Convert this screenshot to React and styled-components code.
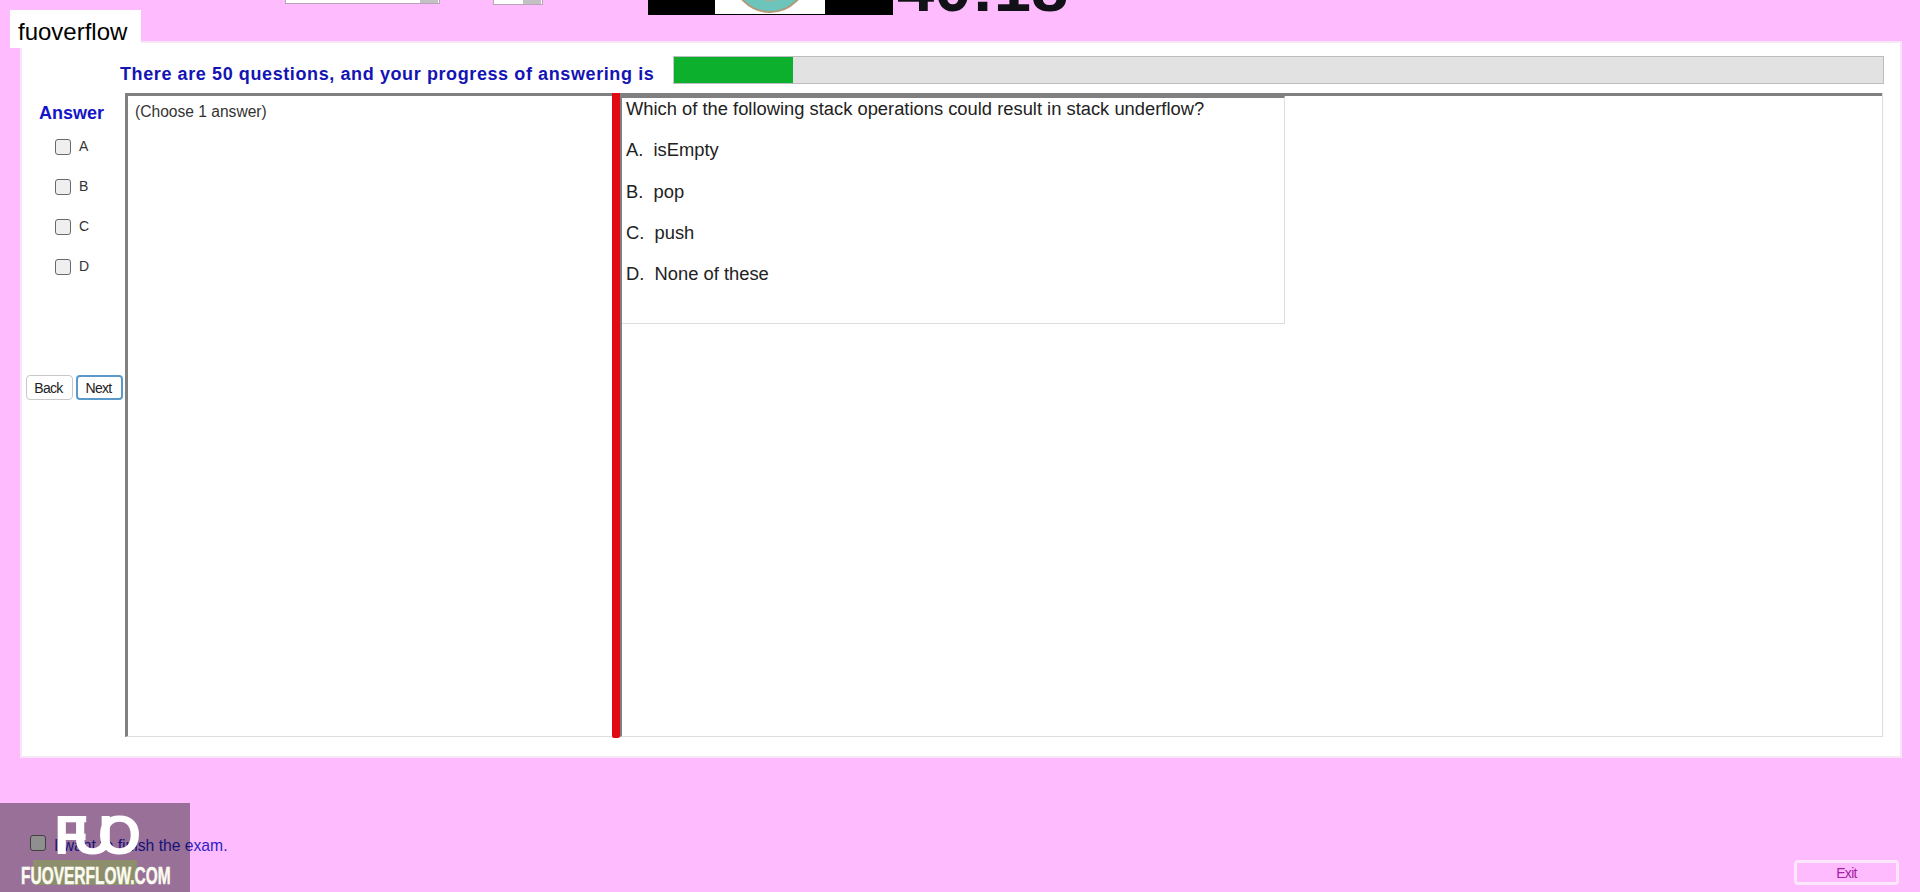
import React from 'react';
import styled, { createGlobalStyle } from 'styled-components';

const GlobalStyle = createGlobalStyle`
  html, body {
    margin: 0;
    padding: 0;
    background: #febbfe;
    font-family: "Liberation Sans", Arial, sans-serif;
  }
`;

const Page = styled.div`
  position: relative;
  width: 1920px;
  height: 892px;
  overflow: hidden;
  display: flex;
  flex-direction: column;
`;

/* top strip is cut off by the window, only the bottom of each control shows */
const TopStrip = styled.div`
  height: 41px;
  flex: none;
  display: flex;
  align-items: flex-start;
  padding-left: 285px;
  overflow: hidden;
`;

const Combo = styled.div`
  width: ${(p) => p.$width}px;
  margin-right: ${(p) => p.$gap}px;
  height: ${(p) => p.$height}px;
  box-sizing: border-box;
  background: #fff;
  border: 1px solid #b5a5b5;
  border-top: none;
  display: flex;
  justify-content: flex-end;
  padding-right: 1px;
`;

const ComboArrow = styled.div`
  width: 18px;
  background: #c4c0c4;
`;

const LogoBox = styled.div`
  width: 245px;
  height: 15px;
  background: #000;
  display: flex;
  justify-content: center;
  margin-left: 3px;
`;

const LogoWhite = styled.div`
  width: 110px;
  height: 14px;
  background: #fff;
  margin-left: -1px;
`;

const Timer = styled.div`
  margin: -45px 0 0 4px;
  font-size: 67px;
  line-height: 66px;
  font-weight: 700;
  color: #131118;
`;

const Tag = styled.div`
  position: absolute;
  left: 10px;
  top: 10px;
  width: 131px;
  height: 38px;
  box-sizing: border-box;
  padding-left: 8px;
  background: #fff;
  color: #000;
  font-size: 24px;
  line-height: 44px;
`;

const Panel = styled.div`
  width: 1882px;
  height: 717px;
  flex: none;
  margin-left: 20px;
  box-sizing: border-box;
  background: #fff;
  border: 2px solid #f6e6f6;
  padding: 13px 17px 19px 3px;
  display: flex;
  flex-direction: column;
`;

const HeaderRow = styled.div`
  height: 28px;
  flex: none;
  margin: 0 -1px 9px 0;
  display: flex;
  align-items: center;
`;

const ProgressLabel = styled.div`
  width: 648px;
  flex: none;
  box-sizing: border-box;
  padding: 8px 0 0 95px;
  font-size: 18px;
  font-weight: 700;
  letter-spacing: 0.6px;
  color: #1414b4;
  white-space: nowrap;
`;

const ProgressTrack = styled.div`
  flex: 1;
  height: 28px;
  box-sizing: border-box;
  background: #e2e2e2;
  border: 1px solid #bdbdbd;
  border-left-color: #c8c8c8;
`;

const ProgressFill = styled.div`
  height: 100%;
  background: #0db02d;
`;

const Body = styled.div`
  flex: 1;
  min-height: 0;
  display: flex;
`;

const AnswerCol = styled.div`
  width: 100px;
  flex: none;
  padding-top: 10px;
`;

const AnswerTitle = styled.div`
  margin-left: 14px;
  height: 20px;
  font-size: 18px;
  line-height: 20px;
  font-weight: 700;
  color: #1414c8;
`;

const OptionList = styled.div`
  margin: 16px 0 100px 30px;
  display: flex;
  flex-direction: column;
  gap: 24px;
`;

const OptionRow = styled.label`
  height: 16px;
  display: flex;
  align-items: center;
  gap: 8px;
  font-size: 14px;
  line-height: 14px;
  color: #333;
`;

const OptionLetter = styled.span`
  margin-top: -2px;
`;

const CheckBox = styled.input.attrs({ type: 'checkbox' })`
  appearance: none;
  width: 16px;
  height: 16px;
  margin: 0;
  flex: none;
  box-sizing: border-box;
  background: #efefef;
  border: 1.5px solid #6a6a6a;
  border-radius: 3px;
`;

const NavRow = styled.div`
  margin-left: 1px;
  display: flex;
  gap: 3px;
`;

const NavButton = styled.button`
  width: 47px;
  height: 25px;
  padding: 0 2px 0 0;
  box-sizing: border-box;
  background: #fff;
  border: ${(p) => (p.$active ? '2px solid #5a9acb' : '1px solid #c8c8c8')};
  border-radius: 4px;
  font-family: inherit;
  font-size: 14px;
  letter-spacing: -0.7px;
  color: #222;
`;

const Main = styled.div`
  flex: 1;
  min-width: 0;
  display: flex;
  border-right: 1px solid #ddd;
`;

const ChoosePane = styled.div`
  width: 487px;
  flex: none;
  box-sizing: border-box;
  border-top: 3px solid #808080;
  border-left: 3px solid #808080;
  border-bottom: 1px solid #ddd;
  padding: 6px 0 0 7px;
  font-size: 15.6px;
  line-height: 20px;
  color: #333;
`;

const Divider = styled.div`
  width: 8px;
  flex: none;
  margin-bottom: -1px;
  background: #e00b12;
  border-radius: 0 0 2px 2px;
`;

const QuestionPane = styled.div`
  flex: 1;
  min-width: 0;
  box-sizing: border-box;
  border-top: 3px solid #808080;
  border-left: 2px solid #808080;
  border-bottom: 1px solid #ddd;
`;

const QuestionBox = styled.div`
  width: 663px;
  height: 228px;
  box-sizing: border-box;
  border-top: 2px solid #808080;
  border-right: 1px solid #ddd;
  border-bottom: 1px solid #ddd;
  padding-left: 4px;
`;

const QuestionLine = styled.div`
  height: 22px;
  margin-bottom: 19.3px;
  font-size: 18.35px;
  line-height: 22px;
  color: #222;
  white-space: pre;
`;

const Footer = styled.div`
  flex: 1;
  padding: 77px 21px 0 30px;
`;

const FinishRow = styled.label`
  height: 16px;
  display: flex;
  align-items: center;
  gap: 8px;
  font-size: 15.7px;
  color: #2b1ec8;
`;

const FinishText = styled.span`
  margin-top: 5px;
`;

const ActionRow = styled.div`
  margin: 9px 0 0 3px;
  display: flex;
  justify-content: space-between;
`;

const FinishButton = styled.div`
  width: 104px;
  height: 25px;
  background: #ecefb4;
  border-radius: 2px;
`;

const ExitButton = styled.button`
  width: 105px;
  height: 25px;
  padding: 0;
  box-sizing: border-box;
  background: transparent;
  border: 3px solid #fbe6fb;
  border-radius: 4px;
  font-family: inherit;
  font-size: 14px;
  letter-spacing: -0.7px;
  color: #a31fa3;
`;

const Watermark = styled.div`
  position: absolute;
  left: 0;
  bottom: 0;
  width: 190px;
  height: 89px;
  background: rgba(0, 0, 0, 0.4);
  display: flex;
  flex-direction: column;
`;

const MarkLogo = styled.div`
  margin: 5px 0 0 54px;
  height: 54px;
  font-size: 56px;
  line-height: 54px;
  font-weight: 700;
  letter-spacing: -15.5px;
  color: #fff;
`;

const MarkText = styled.div`
  margin: 1px 0 0 21px;
  font-size: 24px;
  line-height: 26px;
  font-weight: 700;
  color: #fbfbf0;
  white-space: nowrap;
  -webkit-text-stroke: 0.5px #fbfbf0;
  transform: scaleX(0.645);
  transform-origin: left center;
`;

const OPTIONS = ['A', 'B', 'C', 'D'];
const QUESTION = [
  'Which of the following stack operations could result in stack underflow?',
  'A.  isEmpty',
  'B.  pop',
  'C.  push',
  'D.  None of these',
];

export default function App() {
  const answered = 119 / 1210;

  return (
    <Page>
      <GlobalStyle />
      <TopStrip>
        <Combo $width={155} $height={4} $gap={53}>
          <ComboArrow />
        </Combo>
        <Combo $width={50} $height={5} $gap={102}>
          <ComboArrow />
        </Combo>
        <LogoBox>
          <LogoWhite>
            <svg width="110" height="14" viewBox="0 0 110 14">
              <circle cx="55" cy="-25" r="37" fill="#6cc4bb" stroke="#b09a78" strokeWidth="2" />
              <circle cx="55" cy="-25" r="26" fill="#b5a98c" />
            </svg>
          </LogoWhite>
        </LogoBox>
        <Timer>40:18</Timer>
      </TopStrip>
      <Tag>fuoverflow</Tag>

      <Panel>
        <HeaderRow>
          <ProgressLabel>There are 50 questions, and your progress of answering is</ProgressLabel>
          <ProgressTrack>
            <ProgressFill style={{ width: `${answered * 100}%` }} />
          </ProgressTrack>
        </HeaderRow>
        <Body>
          <AnswerCol>
            <AnswerTitle>Answer</AnswerTitle>
            <OptionList>
              {OPTIONS.map((o) => (
                <OptionRow key={o}>
                  <CheckBox />
                  <OptionLetter>{o}</OptionLetter>
                </OptionRow>
              ))}
            </OptionList>
            <NavRow>
              <NavButton>Back</NavButton>
              <NavButton $active>Next</NavButton>
            </NavRow>
          </AnswerCol>
          <Main>
            <ChoosePane>(Choose 1 answer)</ChoosePane>
            <Divider />
            <QuestionPane>
              <QuestionBox>
                {QUESTION.map((line) => (
                  <QuestionLine key={line}>{line}</QuestionLine>
                ))}
              </QuestionBox>
            </QuestionPane>
          </Main>
        </Body>
      </Panel>

      <Footer>
        <FinishRow>
          <CheckBox />
          <FinishText>I want to finish the exam.</FinishText>
        </FinishRow>
        <ActionRow>
          <FinishButton />
          <ExitButton>Exit</ExitButton>
        </ActionRow>
      </Footer>

      <Watermark>
        <MarkLogo>FUO</MarkLogo>
        <MarkText>FUOVERFLOW.COM</MarkText>
      </Watermark>
    </Page>
  );
}
